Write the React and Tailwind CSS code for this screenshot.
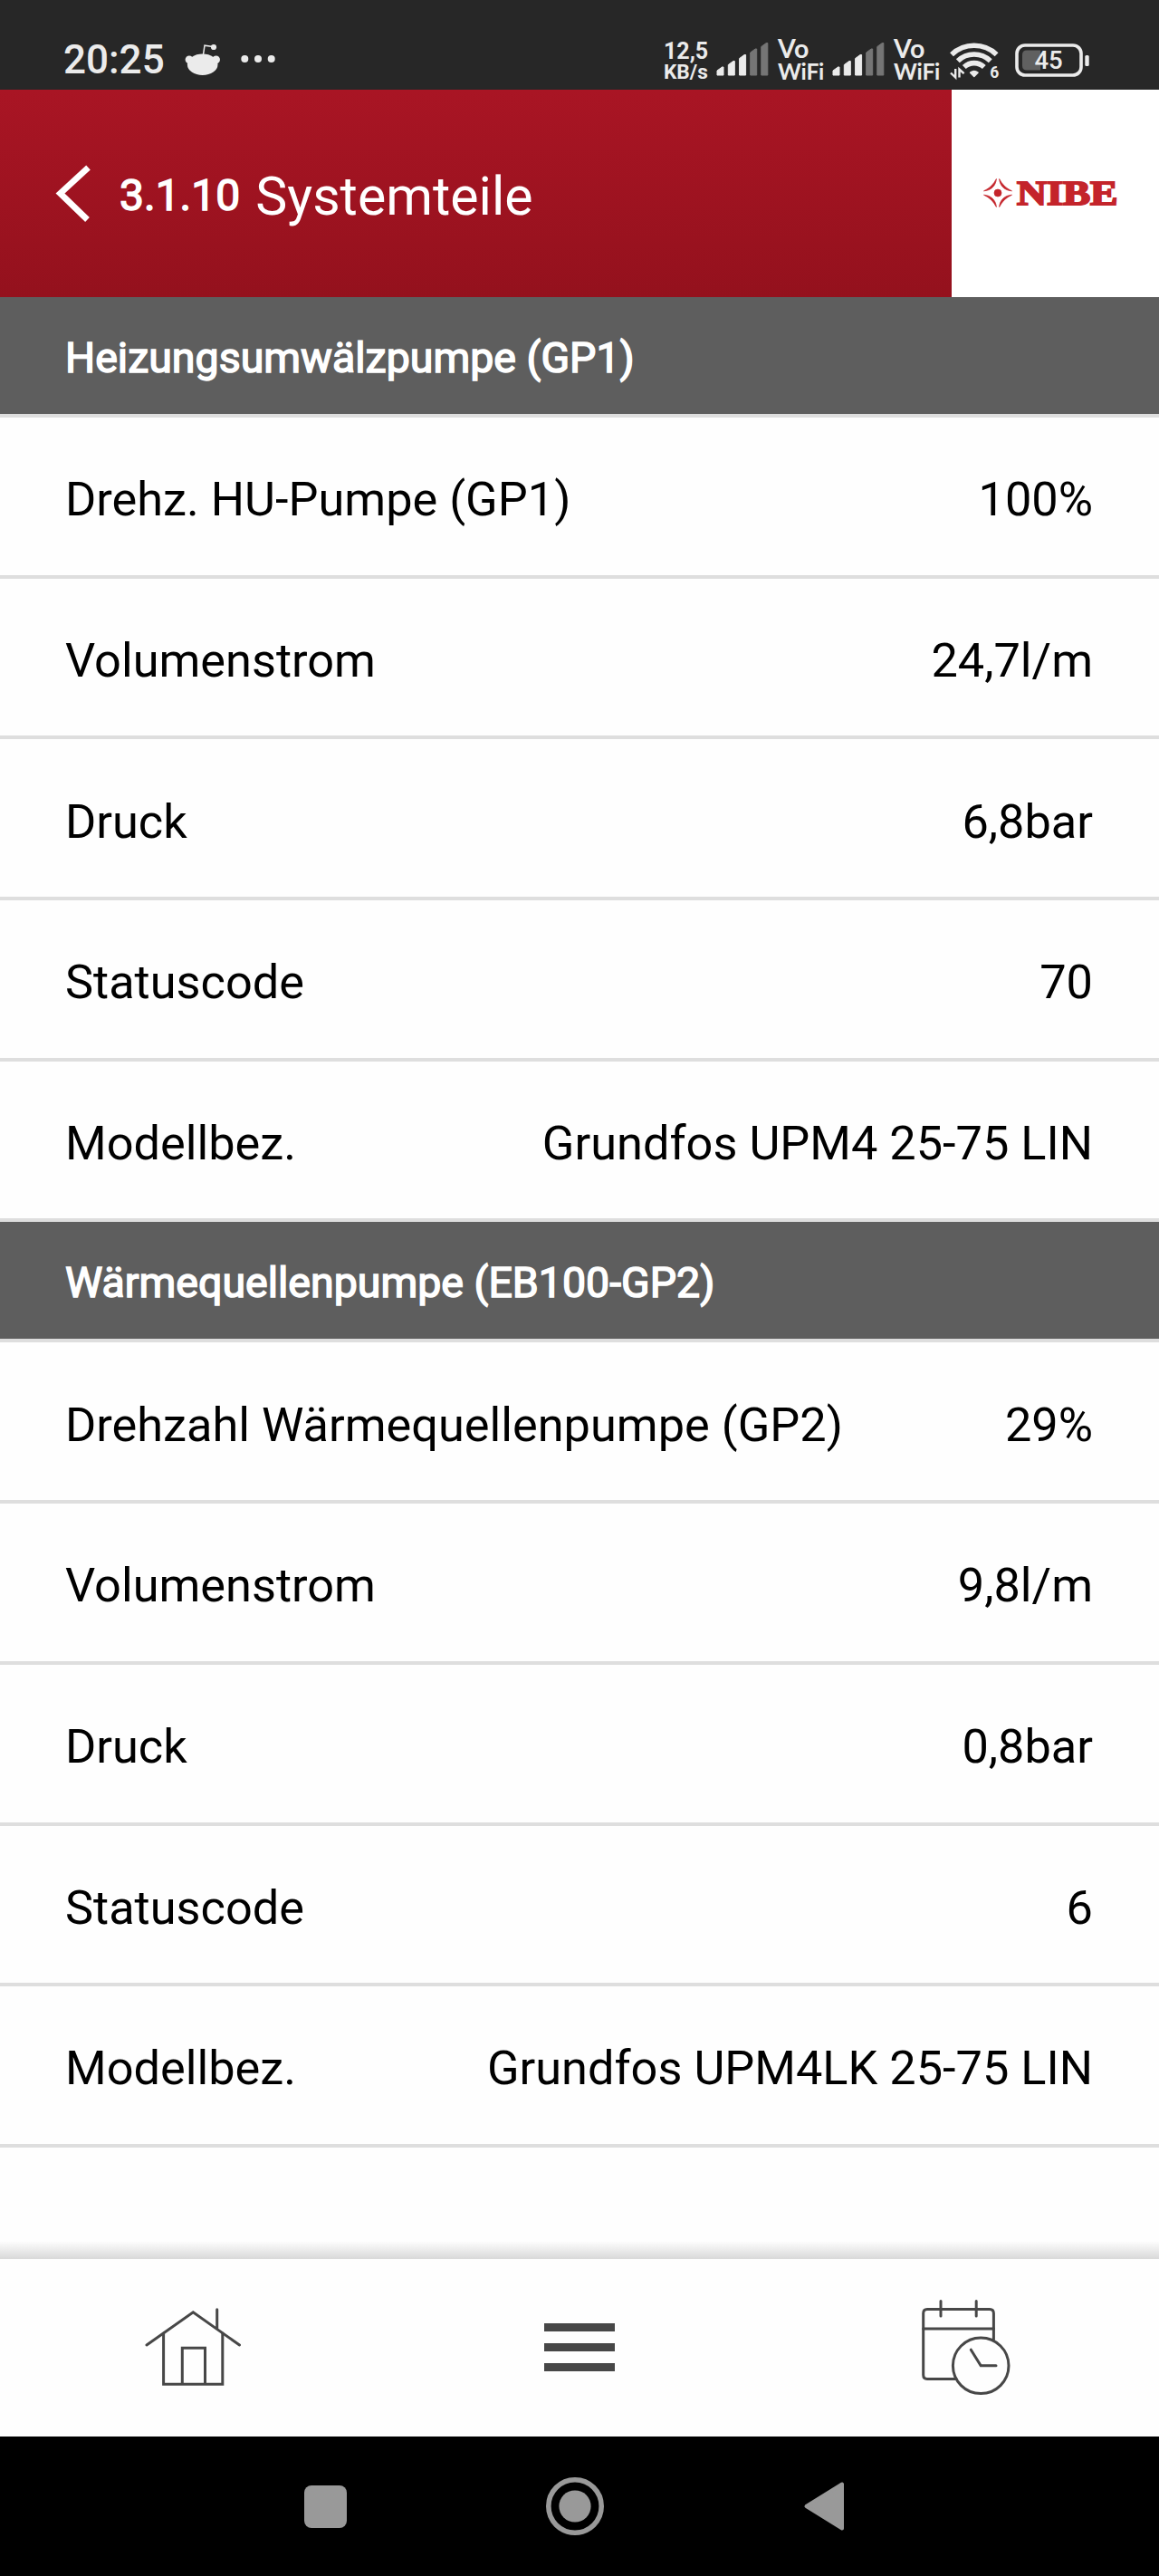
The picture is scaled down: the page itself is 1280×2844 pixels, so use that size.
const sections = [
    {
        title: 'Heizungsumwälzpumpe (GP1)',
        rows: [
            { label: 'Drehz. HU-Pumpe (GP1)', value: '100%' },
            { label: 'Volumenstrom', value: '24,7l/m' },
            { label: 'Druck', value: '6,8bar' },
            { label: 'Statuscode', value: '70' },
            { label: 'Modellbez.', value: 'Grundfos UPM4 25-75 LIN' },
        ],
    },
    {
        title: 'Wärmequellenpumpe (EB100-GP2)',
        rows: [
            { label: 'Drehzahl Wärmequellenpumpe (GP2)', value: '29%' },
            { label: 'Volumenstrom', value: '9,8l/m' },
            { label: 'Druck', value: '0,8bar' },
            { label: 'Statuscode', value: '6' },
            { label: 'Modellbez.', value: 'Grundfos UPM4LK 25-75 LIN' },
        ],
    },
];

const signalBars = [
    { x: 1, top: 27 },
    { x: 13.3, top: 20.5 },
    { x: 25.6, top: 13.5 },
    { x: 37.7, top: 7, dim: true },
    { x: 49.8, top: 0.5, dim: true },
];

function SignalIcon() {
    return (
        <svg width="58" height="38" viewBox="0 0 58 38" className="shrink-0">
            {signalBars.map((bar) => (
                <path
                    key={bar.x}
                    d={`M${bar.x} ${bar.top + 4}L${bar.x + 5.5} ${bar.top}h1.5V36h-7z`}
                    fill={bar.dim ? '#757575' : '#ebebeb'}
                    stroke={bar.dim ? '#757575' : '#ebebeb'}
                    strokeWidth="1"
                    strokeLinejoin="round"
                />
            ))}
        </svg>
    );
}

function VoWifi() {
    return (
        <div className="flex w-[50px] shrink-0 flex-col font-['Lato',sans-serif] font-bold">
            <span className="text-[28.5px] leading-[26px] tracking-[0.4px]">Vo</span>
            <span className="text-[24.6px] leading-[26px] -tracking-[0.2px]">WiFi</span>
        </div>
    );
}

function RedditIcon() {
    return (
        <svg width="40" height="36" viewBox="0 0 40 36" className="ml-[22px] shrink-0" fill="#ebebeb">
            <ellipse cx="19.7" cy="23.3" rx="16.8" ry="11.7" />
            <circle cx="5" cy="17.8" r="4.4" />
            <circle cx="34.6" cy="17.8" r="4.4" />
            <circle cx="32" cy="4" r="3.1" />
            <path d="M20.4 13L22 2.2L31 3.6" fill="none" stroke="#ebebeb" strokeWidth="1.5" />
        </svg>
    );
}

function WifiIcon() {
    return (
        <svg width="56" height="42" viewBox="0 0 56 42" className="shrink-0 overflow-visible">
            <g fill="none" stroke="#ebebeb" strokeWidth="5.6">
                <path d="M2 15.2A36 36 0 0 1 51.6 15.2" />
                <path d="M8.8 22.2A26 26 0 0 1 44.8 22.2" />
                <path d="M15.8 29A16 16 0 0 1 37.8 29" />
            </g>
            <path d="M26.8 39.5L22.6 35.2Q26.8 32 31 35.2z" fill="#ebebeb" stroke="#ebebeb" strokeWidth="1.5" strokeLinejoin="round" />
            <path d="M6.2 31V40.5L1 35.5M10.5 40.5V31.5L15.6 36.2" fill="none" stroke="#ebebeb" strokeWidth="2.4" />
            <text x="44.2" y="41" fontSize="17.5" className="fill-[#ebebeb] font-['Roboto',sans-serif] font-bold">6</text>
        </svg>
    );
}

function BatteryIcon() {
    return (
        <svg width="82" height="37" viewBox="0 0 82 37" className="shrink-0">
            <rect x="2" y="2" width="71" height="33" rx="9" fill="none" stroke="#ebebeb" strokeWidth="3.6" />
            <path d="M13 7.5H28V29.5H13Q8 29.5 8 24.5V12.5Q8 7.5 13 7.5z" fill="#606060" />
            <rect x="77.3" y="13" width="4.4" height="12" rx="1.5" fill="#ebebeb" />
            <text x="21.4" y="28.4" fontSize="27.5" className="fill-[#ebebeb] font-['Roboto',sans-serif] font-medium">45</text>
        </svg>
    );
}

function StatusBar() {
    return (
        <div className="flex h-[99px] items-center bg-[#272727] pt-[33px] pr-[77px] pl-[70px] text-[#ebebeb]">
            <span className="w-[112px] shrink-0 text-[44px] leading-none font-medium">20:25</span>
            <RedditIcon />
            <svg width="38" height="10" viewBox="0 0 38 10" className="ml-[22px] shrink-0" fill="#ebebeb">
                <circle cx="4.3" cy="4" r="4" />
                <circle cx="19" cy="4" r="4" />
                <circle cx="33.7" cy="4" r="4" />
            </svg>
            <div className="ml-auto flex items-center">
                <div className="flex w-[49px] flex-col pt-1 font-bold">
                    <span className="text-[25px] leading-[22px]">12,5</span>
                    <span className="text-[22.6px] leading-[23px]">KB/s</span>
                </div>
                <div className="ml-[9px] flex items-center gap-2.5">
                    <SignalIcon />
                    <VoWifi />
                    <SignalIcon />
                    <VoWifi />
                </div>
                <div className="ml-3">
                    <WifiIcon />
                </div>
                <div className="ml-4">
                    <BatteryIcon />
                </div>
            </div>
        </div>
    );
}

function NibeLogo() {
    return (
        <svg width="150" height="34" viewBox="0 0 150 34" fill="#c4242b" className="mb-0.5 overflow-visible">
            {/* four curved blades around the centre dot */}
            <g transform="translate(17 17)" stroke="#c4242b" strokeWidth="0.7">
                <circle r="4" />
                <path d="M-1.6 -15.5C-2.2 -8 -7.5 -2.6 -15.5 -2.2C-9 -5 -4.8 -9.6 -1.6 -15.5z" />
                <path d="M1.6 -15.5C2.2 -8 7.5 -2.6 15.5 -2.2C9 -5 4.8 -9.6 1.6 -15.5z" />
                <path d="M-1.6 15.5C-2.2 8 -7.5 2.6 -15.5 2.2C-9 5 -4.8 9.6 -1.6 15.5z" />
                <path d="M1.6 15.5C2.2 8 7.5 2.6 15.5 2.2C9 5 4.8 9.6 1.6 15.5z" />
            </g>
            <text
                x="38"
                y="29.8"
                fontSize="38.5"
                textLength="111.5"
                lengthAdjust="spacingAndGlyphs"
                stroke="#c4242b"
                strokeWidth="2"
                className="font-['Liberation_Serif',serif] font-bold"
            >
                NIBE
            </text>
        </svg>
    );
}

function Header() {
    return (
        <header className="flex h-[229px]">
            <div className="flex flex-1 items-center bg-linear-to-b from-[#a91524] to-[#94111d] pl-[60px] text-white">
                <svg width="40" height="64" viewBox="0 0 40 64" fill="none" stroke="white" strokeWidth="6.8">
                    <path d="M37.5 3L6.5 31.5L36.5 60.5" />
                </svg>
                <span className="ml-8 pt-1 text-[48px] leading-none [-webkit-text-stroke:1.5px_white]">3.1.10</span>
                <span className="ml-[17px] pt-1.5 text-[59px] leading-none">Systemteile</span>
            </div>
            <div className="flex w-[229px] items-center justify-end bg-white pr-[45px]">
                <NibeLogo />
            </div>
        </header>
    );
}

function Row({ label, value }) {
    return (
        <div className="flex h-[177.7px] items-center justify-between border-b-4 border-[#dedede] pt-[7px] pr-[73px] pl-[72px] text-[52.3px] text-black">
            <span>{label}</span>
            <span>{value}</span>
        </div>
    );
}

function TabBar() {
    return (
        <nav className="grid h-[196px] grid-cols-3 items-center justify-items-center bg-[#fefefe] pb-0.5">
            <svg width="108" height="90" viewBox="159 2546 108 90" fill="none" stroke="#474747" strokeWidth="3" strokeLinecap="round">
                <path d="M162 2589L213.3 2552.8L264.5 2589M239.7 2549.8V2571" />
                <path d="M180.6 2576V2632.3H245.8V2576M201.3 2632V2592.3H226.5V2632" />
            </svg>
            <div className="flex w-[78px] flex-col gap-[13px]">
                <span className="h-[9px] bg-[#474747]" />
                <span className="h-[9px] bg-[#474747]" />
                <span className="h-[9px] bg-[#474747]" />
            </div>
            <svg width="100" height="108" viewBox="1017 2537 100 108" fill="none" stroke="#474747" strokeWidth="3" strokeLinecap="round">
                <path d="M1056 2626.4H1024Q1019.7 2626.4 1019.7 2622V2554Q1019.7 2549.4 1024 2549.4H1093Q1097.4 2549.4 1097.4 2554V2583" />
                <path d="M1019.7 2571H1097.4M1039 2540.5V2557M1078.2 2540.5V2557" />
                <circle cx="1083.2" cy="2611.8" r="30.8" />
                <path d="M1072.3 2594.2L1083.2 2611.8H1100" />
            </svg>
        </nav>
    );
}

function AndroidNav() {
    return (
        <div className="flex h-[154px] items-center justify-center gap-[220px] bg-black pr-2.5">
            <svg width="47" height="47" fill="#999999">
                <rect width="47" height="47" rx="8" />
            </svg>
            <svg width="64" height="64" viewBox="0 0 64 64">
                <circle cx="32" cy="32" r="29.2" fill="none" stroke="#999999" strokeWidth="5.6" />
                <circle cx="32" cy="32" r="17.6" fill="#999999" />
            </svg>
            <svg width="47" height="56" viewBox="0 0 47 56" fill="#999999" stroke="#999999" strokeWidth="4" strokeLinejoin="round">
                <path d="M3.5 28L43 3.5V52.5z" />
            </svg>
        </div>
    );
}

export default function App() {
    return (
        <div className="flex h-[2844px] w-[1280px] flex-col overflow-hidden bg-[#fefefe] font-['Roboto',sans-serif]">
            <StatusBar />
            <Header />
            <main className="flex flex-1 flex-col">
                {sections.map((section) => (
                    <section key={section.title}>
                        <h2 className="flex h-[133px] items-center border-b-4 border-[#dedede] bg-[#5e5e5e] pt-1.5 pl-[72px] text-[46.5px] font-normal text-white [-webkit-text-stroke:1.5px_white]">
                            {section.title}
                        </h2>
                        {section.rows.map((row) => (
                            <Row key={row.label} label={row.label} value={row.value} />
                        ))}
                    </section>
                ))}
                <div className="mt-auto h-5 bg-linear-to-b from-[#fefefe] to-[#d9d9d9]" />
            </main>
            <TabBar />
            <AndroidNav />
        </div>
    );
}
